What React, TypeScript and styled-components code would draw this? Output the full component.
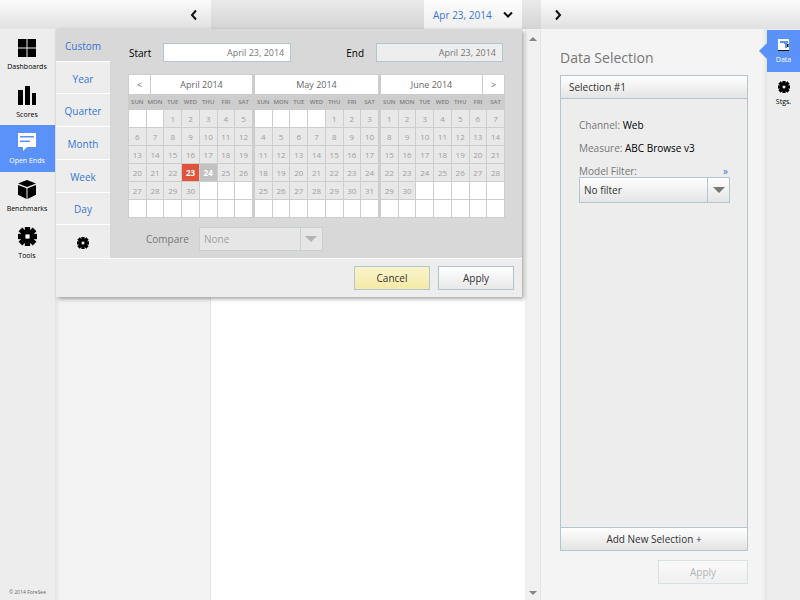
import React from 'react';
import styled, { createGlobalStyle, css } from 'styled-components';

const Global = createGlobalStyle`
  *, *::before, *::after { box-sizing: border-box; }
  body { margin: 0; font-family: 'Open Sans', sans-serif; color: #000; background: #fff; }
  button, input, select { font: inherit; margin: 0; border-radius: 0; }
  h1, h2, p, dl, dd, dt { margin: 0; font-weight: 400; }
`;

const BORDER = '#b2c6cf';
const BLUE = '#3a76d0';
const ACCENT = '#5b92fa';

const Page = styled.div`
  display: flex;
  flex-direction: column;
  min-height: 100vh;
`;

const TopBar = styled.header`
  display: flex;
  height: 29px;
`;

const barFill = css`
  background: linear-gradient(#fafafa, #e1e1e1);
`;

const TopLeft = styled.div`
  ${barFill}
  display: flex;
  align-items: center;
  justify-content: flex-end;
  width: 211px;
  padding-right: 14px;
`;

const TopMiddle = styled.div`
  display: flex;
  flex: 1;
  justify-content: flex-end;
  padding-right: 19px;
  background: linear-gradient(#eaeaea, #d4d4d4);
`;

const TopRight = styled.div`
  ${barFill}
  display: flex;
  align-items: center;
  width: 259px;
  padding-left: 14px;
`;

const IconButton = styled.button`
  display: flex;
  padding: 0;
  border: 0;
  background: none;
`;

const DateTab = styled.button`
  display: flex;
  align-items: center;
  justify-content: space-between;
  width: 98px;
  padding: 1px 9px 0;
  border: 0;
  background: linear-gradient(#fdfdfd, #eeeeee);
  color: ${BLUE};
  font-size: 10px;
  white-space: nowrap;
`;

const Body = styled.div`
  position: relative;
  display: flex;
  flex: 1;
`;

const Nav = styled.nav`
  display: flex;
  flex-direction: column;
  width: 55px;
  background: #ededed;
`;

const NavItem = styled.a<{ $active?: boolean }>`
  display: flex;
  flex-direction: column;
  align-items: center;
  gap: 4px;
  height: 47px;
  padding: 8px 1px 0 0;
  color: ${p => (p.$active ? '#fff' : '#000')};
  background: ${p => (p.$active ? ACCENT : 'transparent')};
  font-size: 7px;
  font-weight: 500;
  line-height: 12px;
  text-decoration: none;
`;

const NavList = styled.div`
  padding-top: 2px;
`;

const Copyright = styled.small`
  margin-top: auto;
  padding-bottom: 3px;
  color: #666;
  font-size: 5px;
  line-height: 10px;
  text-align: center;
`;

const SidePanel = styled.div`
  width: 156px;
  border-right: 1px solid #e6e6e6;
  background: linear-gradient(90deg, #e2e2e2, #f3f3f3 5px);
`;

const Main = styled.main`
  flex: 1;
  background: #fff;
`;

const ScrollTrack = styled.div`
  display: flex;
  flex-direction: column;
  align-items: center;
  justify-content: space-between;
  width: 16px;
  padding: 8px 0 5px;
  border-right: 1px solid #e6e6e6;
  background: #f0f0f0;
`;

const DataPanel = styled.section`
  display: flex;
  flex-direction: column;
  width: 226px;
  padding: 20px 19px 16px;
  background: linear-gradient(270deg, #e4e4e4, #f4f4f4 5px);
`;

const PanelTitle = styled.h2`
  height: 26px;
  color: #777;
  font-size: 14px;
  line-height: 18px;
`;

const SelectionBox = styled.div`
  display: flex;
  flex: 1;
  flex-direction: column;
  border: 1px solid ${BORDER};
  background: #ededed;
`;

const glossy = css`
  background: linear-gradient(#fff, #e4e4e4);
`;

const SelectionHeader = styled.button`
  ${glossy}
  height: 23px;
  padding: 0 8px;
  border: 0;
  border-bottom: 1px solid ${BORDER};
  color: #333;
  font-size: 10px;
  text-align: left;
`;

const AddButton = styled.button`
  ${glossy}
  height: 23px;
  margin-top: auto;
  padding: 0;
  border: 0;
  border-top: 1px solid ${BORDER};
  color: #333;
  font-size: 10px;
`;

const Fields = styled.div`
  display: flex;
  flex-direction: column;
  padding: 15px 17px 0 18px;
`;

const Field = styled.p`
  height: 23px;
  color: #777;
  font-size: 10px;
  line-height: 23px;
  strong { color: #000; font-weight: 400; }
`;

const FilterRow = styled.div`
  display: flex;
  justify-content: space-between;
  height: 17px;
  color: #777;
  font-size: 10px;
  line-height: 23px;
  padding-right: 2px;
  a { color: ${BLUE}; text-decoration: none; }
`;

const SelectWrap = styled.div<{ $disabled?: boolean }>`
  display: flex;
  align-items: stretch;
  height: ${p => (p.$disabled ? 24 : 26)}px;
  width: ${p => (p.$disabled ? '124px' : 'auto')};
  border: 1px solid ${p => (p.$disabled ? '#c9d0d3' : BORDER)};
  background: ${p => (p.$disabled ? '#e6e6e6' : 'linear-gradient(#fff, #e4e4e4)')};
  select {
    flex: 1;
    min-width: 0;
    padding: 0 4px;
    border: 0;
    background: none;
    appearance: none;
    color: ${p => (p.$disabled ? '#a2a2a2' : '#333')};
    opacity: 1;
    font-size: 10px;
  }
  span {
    display: flex;
    align-items: center;
    justify-content: center;
    width: 22px;
    border-left: 1px solid ${p => (p.$disabled ? '#c9d0d3' : BORDER)};
    color: ${p => (p.$disabled ? '#b4b4b4' : '#777')};
  }
`;

const Button = styled.button<{ $tone?: 'warm' | 'faded' }>`
  width: ${p => (p.$tone === 'faded' ? 90 : 76)}px;
  height: 24px;
  padding: 0;
  border: 1px solid ${p => (p.$tone === 'faded' ? '#dae1e4' : BORDER)};
  background: ${p =>
    p.$tone === 'warm'
      ? 'linear-gradient(#faf4cb, #f4e9a6)'
      : p.$tone === 'faded'
        ? 'linear-gradient(#fafafa, #efefef)'
        : 'linear-gradient(#fff, #e8e8e8)'};
  color: ${p => (p.$tone === 'faded' ? '#b4b4b4' : '#333')};
  font-size: 10px;
`;

const PanelActions = styled.div`
  display: flex;
  justify-content: flex-end;
  padding-top: 9px;
`;

const ToolNav = styled.nav`
  position: relative;
  width: 33px;
  padding-top: 1px;
  background: #ededed;
`;

const ToolItem = styled.a<{ $active?: boolean }>`
  position: relative;
  display: flex;
  flex-direction: column;
  align-items: center;
  gap: 4px;
  height: 42px;
  padding-top: 9px;
  background: ${p => (p.$active ? ACCENT : 'transparent')};
  color: ${p => (p.$active ? '#fff' : '#000')};
  font-size: 7px;
  font-weight: 500;
  line-height: 10px;
  text-decoration: none;
  &::before {
    content: '';
    display: ${p => (p.$active ? 'block' : 'none')};
    position: absolute;
    left: -8px;
    top: 13px;
    border: 8px solid transparent;
    border-right-color: ${ACCENT};
    border-left: 0;
  }
`;

const Popup = styled.div`
  position: absolute;
  z-index: 2;
  top: 0;
  left: 56px;
  right: 278px;
  background: #ededed;
  box-shadow: 2px 2px 4px rgba(0, 0, 0, 0.35);
`;

const PopupContent = styled.div`
  display: flex;
  border-bottom: 1px solid #fff;
  background: #d8d8d8;
`;

const Periods = styled.div`
  display: grid;
  grid-template-rows: repeat(7, 1fr);
  width: 54px;
  height: 229px;
`;

const Period = styled.button<{ $active?: boolean }>`
  display: flex;
  align-items: center;
  justify-content: center;
  padding: 2px 0 0;
  border: 0;
  border-bottom: 1px solid #fff;
  background: ${p => (p.$active ? '#d8d8d8' : '#ededed')};
  color: ${BLUE};
  font-size: 10px;
  font-weight: 500;
  &:last-child { border-bottom: 0; }
`;

const CalendarArea = styled.div`
  flex: 1;
  padding: 14px 17px 0 18px;
`;

const DateRow = styled.div`
  display: flex;
  justify-content: space-between;
  padding-right: 2px;
  height: 31px;
`;

const DateField = styled.label`
  display: flex;
  align-items: center;
  gap: 12px;
  height: 19px;
  padding-left: 1px;
  font-size: 10px;
  input {
    width: 128px;
    height: 19px;
    padding: 1px 6px;
    border: 1px solid ${BORDER};
    background: #fff;
    color: #777;
    font-size: 9px;
    text-align: right;
  }
  input:disabled { width: 127px; background: #eee; }
`;

const Months = styled.div`
  display: grid;
  grid-template-columns: repeat(3, 1fr);
  gap: 1px;
  background: #cdcdcd;
`;

const Month = styled.section``;

const MonthHead = styled.div`
  display: flex;
  gap: 1px;
  height: 20px;
  padding: 1px 1px 0;
  color: #666;
  font-size: 9px;
  h2 {
    flex: 1;
    background: #fff;
    font-size: 9px;
    line-height: 20px;
    text-align: center;
  }
  button {
    width: 21px;
    padding: 0;
    border: 0;
    background: #fff;
    color: #666;
  }
`;

const Grid = styled.table`
  width: 100%;
  border-spacing: 1px;
  table-layout: fixed;
  th {
    height: 14px;
    padding: 0;
    color: #808080;
    font-size: 6px;
    font-weight: 600;
    line-height: 14px;
    text-align: center;
  }
`;

const Day = styled.td<{ $kind: 'empty' | 'day' | 'picked' | 'today' }>`
  height: 17px;
  padding: 0;
  background: ${p => ({ empty: '#fff', day: '#e8e8e8', picked: '#e1533b', today: '#c2c2c2' })[p.$kind]};
  color: ${p => (p.$kind === 'day' ? '#a0a0a0' : '#fff')};
  font-size: 8px;
  font-weight: ${p => (p.$kind === 'day' ? 400 : 700)};
  line-height: 17px;
  text-align: center;
`;

const CompareRow = styled.div`
  display: flex;
  align-items: center;
  gap: 10px;
  padding: 9px 0 0 18px;
  color: #777;
  font-size: 10px;
  font-weight: 500;
`;

const PopupActions = styled.div`
  display: flex;
  justify-content: flex-end;
  gap: 8px;
  padding: 7px 8px;
`;

const Chevron = ({ dir }: { dir: 'left' | 'right' }) => (
  <svg width="7" height="12" viewBox="0 0 7 12" fill="none" stroke="#111" strokeWidth="2">
    <path d={dir === 'left' ? 'M6 1.500 2 6l4 4.500' : 'M1 1.500 5 6l-4 4.500'} />
  </svg>
);

const ChevronDown = () => (
  <svg width="10" height="8" viewBox="0 0 10 8" fill="none" stroke="#111" strokeWidth="2">
    <path d="M1 1.500 5 5.500 9 1.500" />
  </svg>
);

const Caret = () => (
  <svg width="12" height="6" viewBox="0 0 12 6" fill="currentColor">
    <path d="M0 0h12L6 6z" />
  </svg>
);

const ScrollArrow = ({ up }: { up?: boolean }) => (
  <svg width="8" height="4" viewBox="0 0 8 4" fill="#858585">
    <path d={up ? 'M0 4h8L4 0z' : 'M0 0h8L4 4z'} />
  </svg>
);

const Gear = ({ size, hole = '#ededed' }: { size: number; hole?: string }) => (
  <svg width={size} height={size} viewBox="0 0 18 18">
    {[0, 45, 90, 135].map(a => (
      <rect key={a} x="6.500" y={a % 90 ? -0.5 : 0} width="5" height={a % 90 ? 19 : 18} transform={`rotate(${a} 9 9)`} />
    ))}
    <circle cx="9" cy="9" r="6.500" />
    <rect x="7" y="7" width="4" height="4" fill={hole} />
  </svg>
);

const DashboardIcon = () => (
  <svg width="18" height="18" viewBox="0 0 18 18">
    <path d="M0 0h8.500v8.500H0zM9.500 0H18v8.500H9.500zM0 9.500h8.500V18H0zM9.500 9.500H18V18H9.500z" />
  </svg>
);

const ScoresIcon = () => (
  <svg width="18" height="19" viewBox="0 0 18 19">
    <path d="M0 4h5v15H0zM7 0h5v19H7zM14 7h4v12h-4z" />
  </svg>
);

const CommentIcon = () => (
  <svg width="18" height="18" viewBox="0 0 18 18">
    <path d="M0 0h18v14H9l-4 4v-4H0z" fill="#fff" />
    <path d="M2 3h14v1.500H2zM2 7.500h10V9H2z" fill={ACCENT} />
  </svg>
);

const CubeIcon = () => (
  <svg width="18" height="19" viewBox="0 0 18 19">
    <path d="M9 0l9 3.500L9 7 0 3.500zM0 5l8.500 3.200V19L0 14.800zM18 5L9.500 8.200V19l8.500-4.200z" />
  </svg>
);

const DataIcon = () => (
  <svg width="12" height="12" viewBox="0 0 12 12">
    <path d="M0 0h11v11H0z" fill="#fff" />
    <path d="M2 2h4v2H2zM6 2h4v2.500H9V9H7V5H6z" fill={ACCENT} />
    <path d="M9 5h1.500v3H9zM0 11h11v1H0z" fill="#111" />
  </svg>
);

const WEEKDAYS = ['SUN', 'MON', 'TUE', 'WED', 'THU', 'FRI', 'SAT'];
const MONTHS = [
  { name: 'April 2014', start: 2, days: 30, picked: 23, today: 24 },
  { name: 'May 2014', start: 4, days: 31, picked: 0, today: 0 },
  { name: 'June 2014', start: 0, days: 30, picked: 0, today: 0 },
];
const PERIODS = ['Custom', 'Year', 'Quarter', 'Month', 'Week', 'Day'];
const NAV = [
  { label: 'Dashboards', icon: <DashboardIcon /> },
  { label: 'Scores', icon: <ScoresIcon /> },
  { label: 'Open Ends', icon: <CommentIcon />, active: true },
  { label: 'Benchmarks', icon: <CubeIcon /> },
  { label: 'Tools', icon: <Gear size={19} hole="#fff" /> },
];

function MonthView({ index }: { index: number }) {
  const m = MONTHS[index];
  return (
    <Month>
      <MonthHead>
        {index === 0 && <button aria-label="Previous month">&lt;</button>}
        <h2>{m.name}</h2>
        {index === 2 && <button aria-label="Next month">&gt;</button>}
      </MonthHead>
      <Grid>
        <thead>
          <tr>{WEEKDAYS.map(d => <th key={d} scope="col">{d}</th>)}</tr>
        </thead>
        <tbody>
          {[0, 1, 2, 3, 4, 5].map(week => (
            <tr key={week}>
              {WEEKDAYS.map((d, i) => {
                const n = week * 7 + i - m.start + 1;
                const inside = n >= 1 && n <= m.days;
                const kind = !inside ? 'empty' : n === m.picked ? 'picked' : n === m.today ? 'today' : 'day';
                return <Day key={d} $kind={kind}>{inside ? n : ''}</Day>;
              })}
            </tr>
          ))}
        </tbody>
      </Grid>
    </Month>
  );
}

export default function App() {
  return (
    <Page>
      <Global />
      <TopBar>
        <TopLeft>
          <IconButton aria-label="Collapse left panel"><Chevron dir="left" /></IconButton>
        </TopLeft>
        <TopMiddle>
          <DateTab>Apr 23, 2014 <ChevronDown /></DateTab>
        </TopMiddle>
        <TopRight>
          <IconButton aria-label="Collapse right panel"><Chevron dir="right" /></IconButton>
        </TopRight>
      </TopBar>
      <Body>
        <Nav>
          <NavList>
            {NAV.map(n => (
              <NavItem key={n.label} href="#" $active={n.active}>{n.icon}{n.label}</NavItem>
            ))}
          </NavList>
          <Copyright>© 2014 ForeSee</Copyright>
        </Nav>
        <SidePanel />
        <Main />
        <ScrollTrack><ScrollArrow up /><ScrollArrow /></ScrollTrack>
        <DataPanel>
          <PanelTitle>Data Selection</PanelTitle>
          <SelectionBox>
            <SelectionHeader>Selection #1</SelectionHeader>
            <Fields>
              <Field>Channel: <strong>Web</strong></Field>
              <Field>Measure: <strong>ABC Browse v3</strong></Field>
              <FilterRow>
                <label htmlFor="filter">Model Filter:</label>
                <a href="#">»</a>
              </FilterRow>
              <SelectWrap>
                <select id="filter"><option>No filter</option></select>
                <span><Caret /></span>
              </SelectWrap>
            </Fields>
            <AddButton>Add New Selection +</AddButton>
          </SelectionBox>
          <PanelActions><Button $tone="faded" disabled>Apply</Button></PanelActions>
        </DataPanel>
        <ToolNav>
          <ToolItem href="#" $active><DataIcon />Data</ToolItem>
          <ToolItem href="#"><Gear size={12} />Stgs.</ToolItem>
        </ToolNav>
        <Popup>
          <PopupContent>
            <Periods>
              {PERIODS.map((p, i) => <Period key={p} $active={i === 0}>{p}</Period>)}
              <Period aria-label="Settings"><Gear size={12} /></Period>
            </Periods>
            <CalendarArea>
              <DateRow>
                <DateField>Start<input defaultValue="April 23, 2014" /></DateField>
                <DateField>End<input defaultValue="April 23, 2014" disabled /></DateField>
              </DateRow>
              <Months>
                {MONTHS.map((m, i) => <MonthView key={m.name} index={i} />)}
              </Months>
              <CompareRow>
                <label htmlFor="compare">Compare</label>
                <SelectWrap $disabled>
                  <select id="compare" disabled><option>None</option></select>
                  <span><Caret /></span>
                </SelectWrap>
              </CompareRow>
            </CalendarArea>
          </PopupContent>
          <PopupActions>
            <Button $tone="warm">Cancel</Button>
            <Button>Apply</Button>
          </PopupActions>
        </Popup>
      </Body>
    </Page>
  );
}
